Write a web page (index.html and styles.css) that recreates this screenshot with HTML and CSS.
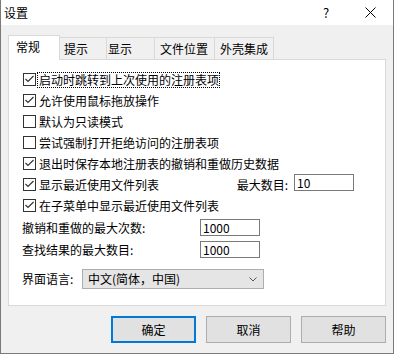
FILE: index.html
```html
<!DOCTYPE html>
<html lang="zh-CN">
<head>
<meta charset="utf-8">
<title>设置</title>
<link rel="stylesheet" href="styles.css">
</head>
<body>
<div class="dialog">
  <div class="titlebar">
    <span class="title">设置</span>
    <span class="tb-btn help">?</span>
    <span class="tb-btn close">
      <svg width="11" height="11" viewBox="0 0 11 11"><path d="M0.5 0.5 L10.5 10.5 M10.5 0.5 L0.5 10.5" stroke="#000" stroke-width="1" fill="none"/></svg>
    </span>
  </div>
  <div class="body">
    <div class="tabs">
      <div class="tab tab-active tab-general">常规</div>
      <div class="tab tab-tips">提示</div>
      <div class="tab tab-display">显示</div>
      <div class="tab tab-files">文件位置</div>
      <div class="tab tab-shell">外壳集成</div>
    </div>
    <div class="panel">
      <div class="checks">
        <div class="row"><span class="box checked"></span><span class="label focus">启动时跳转到上次使用的注册表项</span></div>
        <div class="row"><span class="box checked"></span><span class="label">允许使用鼠标拖放操作</span></div>
        <div class="row"><span class="box"></span><span class="label">默认为只读模式</span></div>
        <div class="row"><span class="box"></span><span class="label">尝试强制打开拒绝访问的注册表项</span></div>
        <div class="row"><span class="box checked"></span><span class="label">退出时保存本地注册表的撤销和重做历史数据</span></div>
        <div class="row"><span class="box checked"></span><span class="label">显示最近使用文件列表</span>
          <span class="max-label">最大数目:</span><span class="field field-max">10</span></div>
        <div class="row"><span class="box checked"></span><span class="label">在子菜单中显示最近使用文件列表</span></div>
      </div>
      <div class="numbers">
        <div class="num-row"><span class="num-label">撤销和重做的最大次数:</span><span class="field field-num">1000</span></div>
        <div class="num-row"><span class="num-label">查找结果的最大数目:</span><span class="field field-num">1000</span></div>
      </div>
      <div class="lang-row">
        <span class="lang-label">界面语言:</span>
        <div class="select">
          <span>中文(简体，中国)</span>
          <svg class="chev" width="8" height="5" viewBox="0 0 8 5"><path d="M0.5 0.5 L4 4 L7.5 0.5" stroke="#555" stroke-width="1" fill="none"/></svg>
        </div>
      </div>
    </div>
    <div class="buttons">
      <div class="btn btn-default">确定</div>
      <div class="btn">取消</div>
      <div class="btn">帮助</div>
    </div>
  </div>
</div>
</body>
</html>
```
FILE: styles.css
```css
* { box-sizing: border-box; }
html, body { margin: 0; padding: 0; background: #ffffff; }
body {
  font-family: "Noto Sans CJK SC", "Noto Sans", sans-serif;
  font-size: 12px;
  line-height: 14px;
  color: #000;
}
.dialog {
  width: 394px;
  height: 354px;
  border: 1px solid #7a7a7a;
  border-top: none;
  background: #f0f0f0;
  display: flex;
  flex-direction: column;
}
.titlebar {
  height: 25px;
  background: #ffffff;
  display: flex;
  align-items: center;
  padding-left: 3px;
}
.title { flex: 1; }
.tb-btn {
  width: 46px;
  height: 25px;
  display: flex;
  align-items: center;
  justify-content: center;
}
.help { font-size: 13px; padding-left: 4px; }
.close svg { display: block; }
.body {
  flex: 1;
  display: flex;
  flex-direction: column;
  padding: 10px 7px 10px 7px;
}
.tabs {
  height: 24px;
  display: flex;
  align-items: flex-end;
}
.tab {
  height: 22px;
  border: 1px solid #d9d9d9;
  border-bottom: none;
  background: #f0f0f0;
  padding-top: 4px;
  margin-left: -1px;
  white-space: nowrap;
}
.tab-active {
  height: 25px;
  margin-bottom: -1px;
  margin-left: 0;
  background: #ffffff;
  position: relative;
  z-index: 1;
  padding-top: 4px;
}
.tab-general { width: 52px; padding-left: 7px; }
.tab-tips { width: 48px; padding-left: 4px; }
.tab-display { width: 49px; padding-left: 1px; }
.tab-files { width: 61px; padding-left: 5px; }
.tab-shell { width: 60px; padding-left: 5px; }

.panel {
  height: 247px;
  background: #ffffff;
  border: 1px solid #d9d9d9;
  padding: 9px 0 0 14px;
}
.checks { display: flex; flex-direction: column; }
.row {
  height: 21px;
  display: flex;
  align-items: flex-start;
}
.box {
  width: 13px;
  height: 13px;
  margin-top: 4px;
  border: 1px solid #333333;
  background: #ffffff;
  margin-right: 2px;
  flex: none;
}
.box.checked {
  background: #ffffff url("data:image/svg+xml,%3Csvg xmlns='http://www.w3.org/2000/svg' width='11' height='11' viewBox='0 0 11 11'%3E%3Cpath d='M1.5 5 L4 7.5 L9.5 2' stroke='%23333' stroke-width='1.2' fill='none'/%3E%3C/svg%3E") no-repeat center;
}
.label { margin-top: 4px; padding-left: 1px; }
.focus { outline: 1px dotted #000; outline-offset: 0; }
.max-label { margin-left: auto; margin-top: 4px; margin-right: 6px; }
.field {
  height: 17px;
  border: 1px solid #7a7a7a;
  background: #fff;
  padding-left: 2px;
  line-height: 15px;
}
.field-max { width: 60px; margin-right: 31px; }
.numbers {
  margin-top: 3px;
  display: flex;
  flex-direction: column;
  gap: 5px;
}
.num-row {
  display: flex;
  align-items: center;
  height: 17px;
}
.num-label { width: 178px; margin-left: -1px; }
.field-num { width: 60px; }
.lang-row {
  margin-top: 11px;
  display: flex;
  align-items: center;
  height: 20px;
}
.lang-label { width: 60px; margin-left: -1px; }
.select {
  width: 182px;
  height: 20px;
  background: #e5e5e5;
  border: 1px solid #adadad;
  display: flex;
  align-items: center;
  padding-left: 5px;
  padding-right: 6px;
  justify-content: space-between;
}
.chev { display: block; }
.buttons {
  margin-top: 10px;
  display: flex;
  justify-content: flex-end;
  gap: 10px;
}
.btn {
  width: 85px;
  height: 27px;
  background: #e1e1e1;
  border: 1px solid #adadad;
  display: flex;
  align-items: center;
  justify-content: center;
}
.btn-default { border: 2px solid #0078d7; }
```
